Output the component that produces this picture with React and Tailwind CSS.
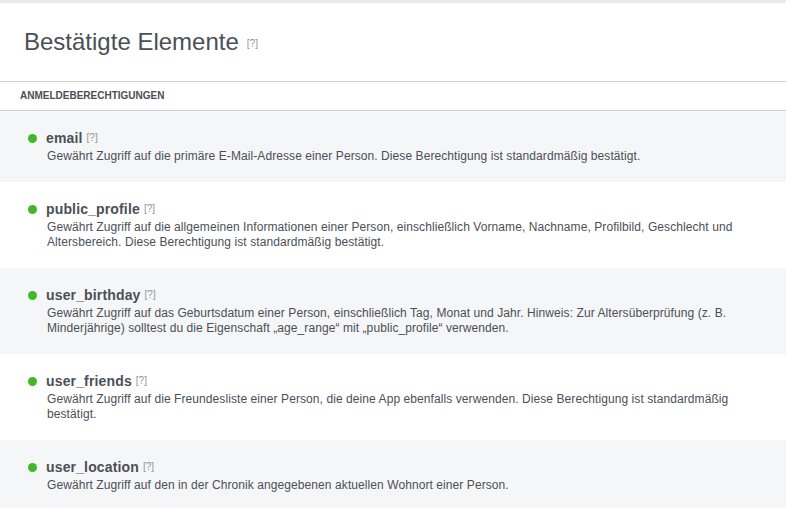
const permissions = [
  {
    name: 'email',
    text: 'Gewährt Zugriff auf die primäre E-Mail-Adresse einer Person. Diese Berechtigung ist standardmäßig bestätigt.',
  },
  {
    name: 'public_profile',
    text: 'Gewährt Zugriff auf die allgemeinen Informationen einer Person, einschließlich Vorname, Nachname, Profilbild, Geschlecht und Altersbereich. Diese Berechtigung ist standardmäßig bestätigt.',
  },
  {
    name: 'user_birthday',
    text: 'Gewährt Zugriff auf das Geburtsdatum einer Person, einschließlich Tag, Monat und Jahr. Hinweis: Zur Altersüberprüfung (z. B. Minderjährige) solltest du die Eigenschaft „age_range“ mit „public_profile“ verwenden.',
  },
  {
    name: 'user_friends',
    text: 'Gewährt Zugriff auf die Freundesliste einer Person, die deine App ebenfalls verwenden. Diese Berechtigung ist standardmäßig bestätigt.',
  },
  {
    name: 'user_location',
    text: 'Gewährt Zugriff auf den in der Chronik angegebenen aktuellen Wohnort einer Person.',
  },
]

function Help({ className }) {
  return <span className={'text-[#90949c] ' + className}>[?]</span>
}

function PermissionRow({ item, index }) {
  return (
    <div className={(index % 2 === 0 ? 'bg-[#f5f6f7]' : 'bg-white') + ' pl-7 pr-10 pt-[18px] pb-[18px]'}>
      <div className="flex items-center">
        <span className="h-[9px] w-[9px] rounded-full bg-[#42b72a]" />
        <span className="ml-[9px] text-[14px] font-bold leading-[18px] tracking-[0.15px] text-[#4b4f56]">{item.name}</span>
        <Help className="ml-[4px] text-[10px] leading-[18px]" />
      </div>
      <p className="ml-[19px] mt-[2px] text-[12px] leading-[15px] tracking-[0.08px] text-[#4b4f56]">{item.text}</p>
    </div>
  )
}

export default function App() {
  return (
    <div
      className="h-[508px] w-[786px] overflow-hidden bg-[#e9ebee] pt-[3px]"
      style={{ fontFamily: '"Liberation Sans", Arial, sans-serif' }}
    >
      <div className="bg-white">
        <div className="flex items-center border-b border-[#ccd0d5] pl-6 pt-[24px] pb-[24px]">
          <h1 className="text-[24px] leading-[30px] text-[#4b4f56]">Bestätigte Elemente</h1>
          <Help className="ml-[8px] mt-[2px] text-[10px]" />
        </div>
        <div className="border-b border-[#ccd0d5] pl-5 py-[8px] text-[10px] font-bold leading-[12px] text-[#4b4f56]">
          ANMELDEBERECHTIGUNGEN
        </div>
        {permissions.map((p, i) => (
          <PermissionRow key={p.name} item={p} index={i} />
        ))}
      </div>
    </div>
  )
}
